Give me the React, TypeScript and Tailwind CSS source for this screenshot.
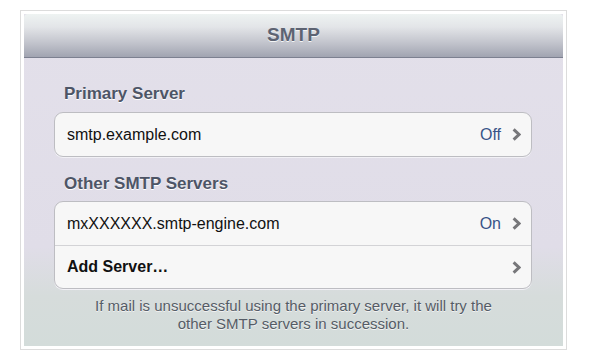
import React from "react";

const Chevron = () => (
  <svg width="9" height="13" viewBox="0 0 9 13" className="shrink-0">
    <polyline points="1.6,1.4 7,6.5 1.6,11.6" fill="none" stroke="#77777a" strokeWidth="3" strokeLinecap="butt" strokeLinejoin="miter" />
  </svg>
);

type RowProps = { label: string; value?: string; bold?: boolean; divider?: boolean };

const Row = ({ label, value, bold, divider }: RowProps) => (
  <div
    className={`flex items-center h-[43px] pl-[12px] pr-[10px] ${divider ? "border-t border-[#d3d3d6]" : ""}`}
  >
    <span className={`flex-1 text-[16px] text-[#111] ${bold ? "font-bold" : ""}`}>{label}</span>
    {value && <span className="text-[16px] text-[#385488] mr-[11px]">{value}</span>}
    <Chevron />
  </div>
);

const SectionLabel = ({ children }: { children: React.ReactNode }) => (
  <div className="pl-[40px] text-[17px] leading-[20px] font-bold text-[#4d5566] [text-shadow:0_1px_0_#fff]">
    {children}
  </div>
);

export default function App() {
  return (
    <div
      className="w-[600px] h-[363px] bg-white pt-[10px] pl-[20px]"
      style={{ fontFamily: '"Liberation Sans", Arial, sans-serif' }}
    >
      <div className="w-[547px] h-[340px] border border-[#dcdcdc] p-[3px]">
        <div className="h-[332px] flex flex-col bg-[linear-gradient(to_bottom,#e3e0ea_0%,#e0dde8_70%,#d6dcdb_85%,#d3dcda_100%)]">
          <div className="h-[44px] shrink-0 flex items-center justify-center rounded-t-[4px] border-b border-[#7c8090] bg-[linear-gradient(to_bottom,#eef3f2_0%,#e3e5e8_30%,#c4c6ce_65%,#a1a4b1_100%)]">
            <span className="text-[19px] font-bold text-[#5d6372] [text-shadow:0_1px_0_#f4f6f6]">SMTP</span>
          </div>

          <div className="pt-[26px]">
            <SectionLabel>Primary Server</SectionLabel>
            <div className="mt-[8px] ml-[30px] mr-[31px] rounded-[9px] border border-[#bdbdc2] bg-[#f7f7f7] shadow-[0_1px_0_#f2f1f6]">
              <Row label="smtp.example.com" value="Off" />
            </div>
          </div>

          <div className="pt-[17px]">
            <SectionLabel>Other SMTP Servers</SectionLabel>
            <div className="mt-[7px] ml-[30px] mr-[31px] rounded-[9px] border border-[#bdbdc2] bg-[#f7f7f7] shadow-[0_1px_0_#f2f1f6]">
              <Row label="mxXXXXXX.smtp-engine.com" value="On" />
              <Row label="Add Server…" bold divider />
            </div>
          </div>

          <p className="mt-[8px] text-center text-[15px] leading-[18px] text-[#555c66] [text-shadow:0_1px_0_#f2f2f2]">
            If mail is unsuccessful using the primary server, it will try the
            <br />
            other SMTP servers in succession.
          </p>
        </div>
      </div>
    </div>
  );
}
